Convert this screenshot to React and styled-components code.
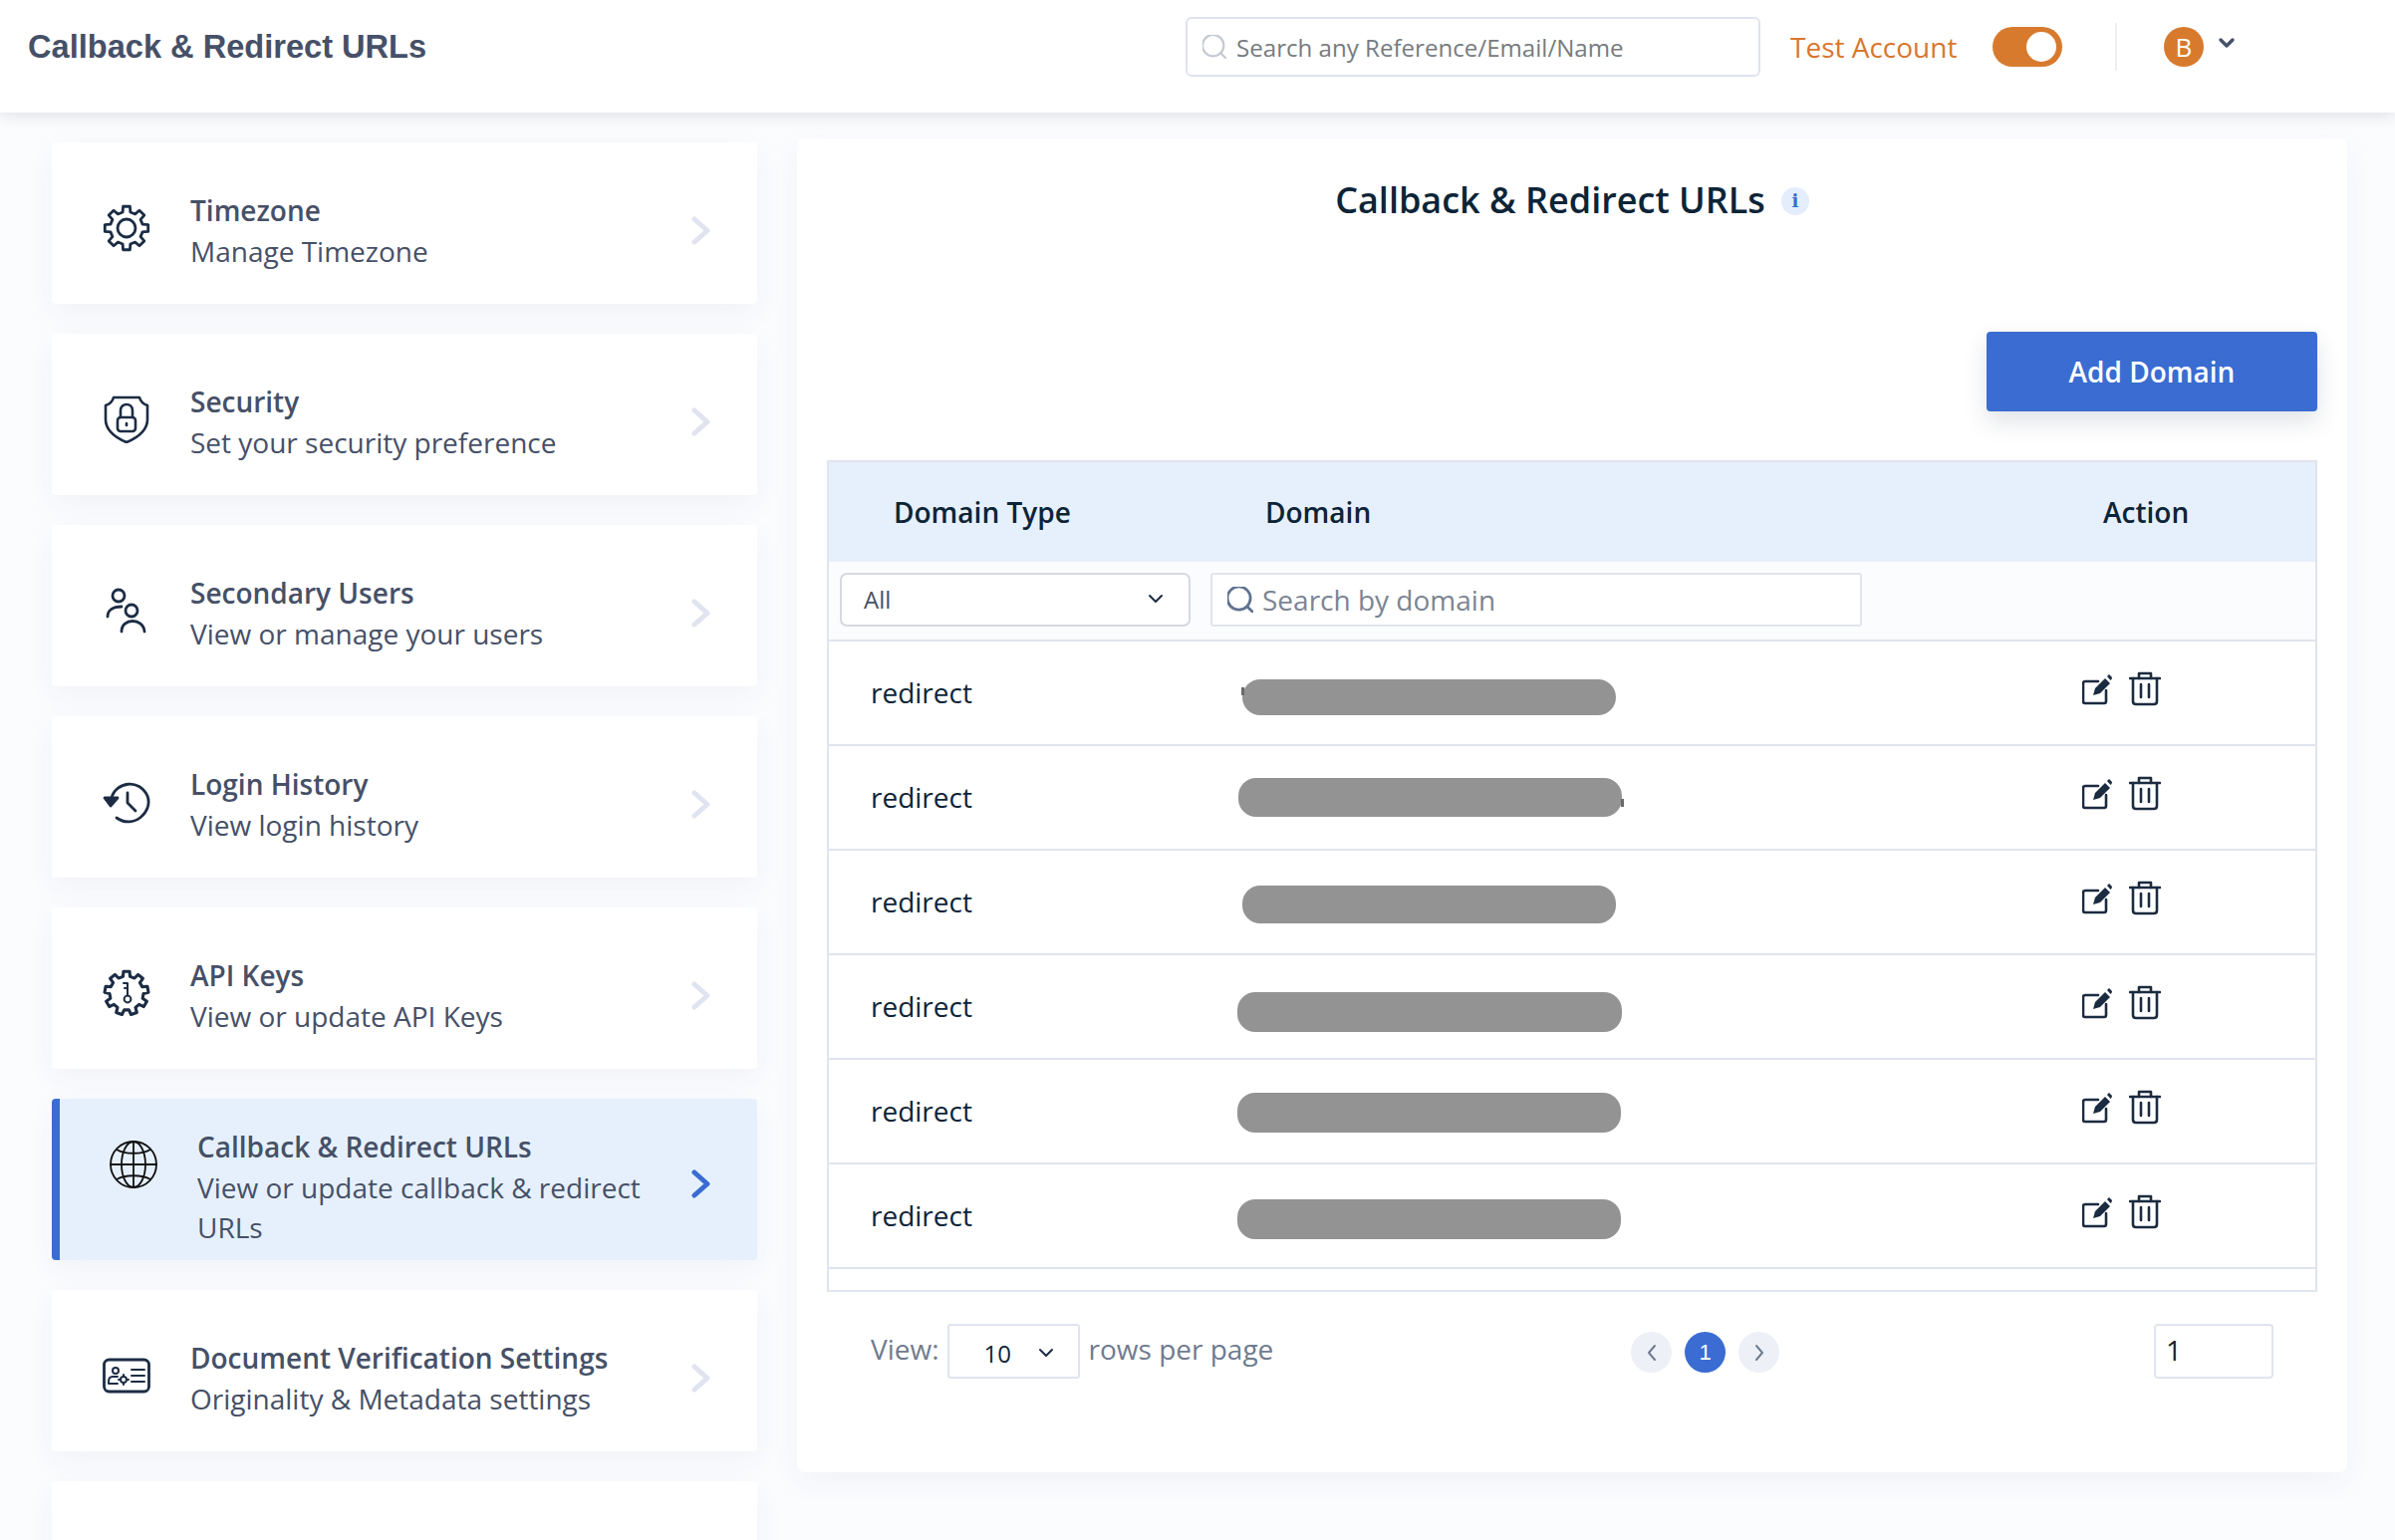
import React from "react";
import styled, { createGlobalStyle } from "styled-components";
import { Search } from "lucide-react";

const GlobalStyle = createGlobalStyle`
  html, body {
    margin: 0;
    height: 1546px;
    overflow: hidden;
    background: #fbfcfe;
    font-family: "Open Sans", "Noto Sans", sans-serif;
  }
  * { box-sizing: border-box; }
`;

const Page = styled.div`
  width: 2404px;
  height: 1546px;
  overflow: hidden;
`;

const Header = styled.header`
  position: relative;
  z-index: 2;
  height: 113px;
  padding: 17px 160px 36px 28px;
  display: flex;
  align-items: center;
  background: #fff;
  box-shadow: 0 3px 14px rgba(30, 35, 50, 0.13);
`;

const HeaderTitle = styled.h1`
  flex: 1;
  margin: 0;
  font-family: "Liberation Sans", Arial, sans-serif;
  font-size: 32.6px;
  font-weight: 700;
  color: #465067;
`;

const TopSearch = styled.label`
  width: 577px;
  height: 60px;
  padding-left: 15px;
  display: flex;
  align-items: center;
  gap: 10px;
  border: 2px solid #dfe3ef;
  border-radius: 6px;
  color: #c4c9d3;
`;

const TopSearchInput = styled.input`
  flex: 1;
  min-width: 0;
  border: 0;
  outline: 0;
  padding: 0;
  background: none;
  font: 400 24.1px "Open Sans", sans-serif;
  &::placeholder { color: #777b80; opacity: 1; }
`;

const AccountLabel = styled.span`
  width: 170px;
  margin-left: 30px;
  font-size: 28px;
  white-space: nowrap;
  color: #d9772d;
`;

const Toggle = styled.div`
  width: 70px;
  height: 40px;
  margin-left: 33px;
  padding: 5px 6px;
  display: flex;
  justify-content: flex-end;
  border-radius: 20px;
  background: #d87a2e;
`;

const ToggleKnob = styled.span`
  width: 30px;
  height: 30px;
  border-radius: 50%;
  background: #fff;
`;

const HeaderDivider = styled.span`
  width: 2px;
  height: 48px;
  margin: 0 47px 0 53px;
  background: #eeeff3;
`;

const Avatar = styled.span`
  width: 40px;
  height: 40px;
  display: flex;
  align-items: center;
  justify-content: center;
  border-radius: 50%;
  background: #d87a2e;
  color: #fff;
  font-size: 26px;
`;

const AvatarCaret = styled.svg`
  width: 18px;
  height: 12px;
  margin: 0 0 8px 14px;
`;

const Body = styled.div`
  display: flex;
  align-items: flex-start;
  gap: 40px;
  padding: 26px 48px 0 52px;
`;

const Sidebar = styled.nav`
  width: 708px;
  flex: none;
  padding-top: 4px;
  display: flex;
  flex-direction: column;
  gap: 30px;
`;

const MenuCard = styled.div`
  height: 162px;
  padding: 14px 47px 0 ${(p) => (p.$active ? 50 : 51)}px;
  display: flex;
  align-items: center;
  border-left: ${(p) => (p.$active ? "8px solid #3a6cd1" : "0")};
  border-radius: 4px;
  background: ${(p) => (p.$active ? "#e6f0fd" : "#fff")};
  box-shadow: 0 10px 30px rgba(40, 60, 110, 0.05);
`;

const MenuIcon = styled.svg`
  width: 48px;
  height: 48px;
  flex: none;
  margin-top: 15px;
  align-self: flex-start;
  fill: none;
  stroke: ${(p) => p.$stroke || "#1c2c44"};
  stroke-width: ${(p) => p.$weight || 2.8};
  stroke-linecap: round;
  stroke-linejoin: round;
`;

const MenuBlock = styled.div`
  flex: 1;
  display: flex;
  align-items: flex-start;
`;

const MenuText = styled.div`
  flex: 1;
  margin-left: 40px;
  padding-top: 2px;
  color: #465067;
  font-size: 28px;
  line-height: 39.5px;
`;

const MenuTitle = styled.div`
  margin-bottom: 1.5px;
  font-weight: 600;
`;

const MenuChevron = styled.svg`
  width: 19px;
  height: 29px;
  flex: none;
  margin-top: ${(p) => (p.$active ? -5 : 0)}px;
  fill: none;
  stroke: ${(p) => (p.$active ? "#3a6cd1" : "#e0e3f0")};
  stroke-width: 5;
  stroke-linecap: round;
  stroke-linejoin: round;
`;

const Panel = styled.main`
  flex: 1;
  height: 1339px;
  padding: 36px 30px 0;
  border-radius: 8px;
  background: #fff;
  box-shadow: 0 10px 30px rgba(40, 60, 110, 0.05);
`;

const PanelHeading = styled.div`
  height: 50px;
  display: flex;
  align-items: center;
  justify-content: center;
  gap: 16px;
`;

const PanelTitle = styled.h2`
  margin: 0;
  font-size: 36px;
  font-weight: 600;
  color: #0c2437;
`;

const InfoBadge = styled.span`
  width: 28px;
  height: 28px;
  margin-top: 3px;
  display: flex;
  align-items: center;
  justify-content: center;
  border-radius: 50%;
  background: #e3edfb;
  color: #3a6cd1;
  font: 700 18px "DejaVu Serif", serif;
`;

const PanelActions = styled.div`
  margin-top: 108px;
  display: flex;
  justify-content: flex-end;
`;

const AddButton = styled.button`
  width: 332px;
  height: 80px;
  border: 0;
  border-radius: 4px;
  background: #3a6cd1;
  box-shadow: 0 10px 24px rgba(30, 40, 70, 0.14);
  color: #fff;
  font: 600 28px "Open Sans", sans-serif;
`;

const Table = styled.div`
  height: 835px;
  margin-top: 49px;
  border: 2px solid #e0e4ee;
`;

const HeadRow = styled.div`
  height: 100px;
  display: grid;
  grid-template-columns: 373px 675px 1fr;
  align-items: center;
  background: #e6f0fd;
`;

const HeadCell = styled.div`
  padding-left: ${(p) => p.$inset}px;
  color: #0c2437;
  font-size: 28px;
  font-weight: 600;
`;

const FilterRow = styled.div`
  height: 80px;
  padding: 11px 0 0 11px;
  display: flex;
  align-items: flex-start;
  gap: 20px;
  border-bottom: 2px solid #e0e4ee;
  background: #fbfcfe;
`;

const TypeSelect = styled.div`
  width: 352px;
  height: 54px;
  padding: 0 25px 2px 22px;
  display: flex;
  align-items: center;
  justify-content: space-between;
  border: 2px solid #d5d8e0;
  border-radius: 7px;
  background: #fff;
  color: #465067;
  font-size: 24px;
`;

const DomainSearch = styled.label`
  width: 654px;
  height: 54px;
  padding-left: 15px;
  display: flex;
  align-items: center;
  gap: 9px;
  border: 2px solid #e0e4ee;
  border-radius: 3px;
  background: #fff;
  color: #5f7290;
`;

const DomainInput = styled.input`
  flex: 1;
  min-width: 0;
  border: 0;
  outline: 0;
  padding: 0;
  background: none;
  font: 400 28px "Open Sans", sans-serif;
  &::placeholder { color: #7c8493; opacity: 1; }
`;

const Caret = styled.svg`
  width: 16px;
  height: 10px;
  fill: none;
  stroke: #1c2c44;
  stroke-width: 2;
  stroke-linecap: round;
  stroke-linejoin: round;
`;

const Row = styled.div`
  height: 105px;
  display: grid;
  grid-template-columns: 373px 675px 1fr;
  align-items: center;
  border-bottom: 2px solid #e0e4ee;
`;

const TypeCell = styled.div`
  padding: 0 0 2px 42px;
  color: #0c2437;
  font-size: 28px;
`;

const Redaction = styled.div`
  position: relative;
  width: ${(p) => p.$width}px;
  height: ${(p) => p.$height}px;
  margin-left: ${(p) => p.$left}px;
  border-radius: 18px;
  background: #939393;
  transform: translateY(${(p) => p.$shift}px);

  &::before {
    content: "";
    display: ${(p) => (p.$tick ? "block" : "none")};
    position: absolute;
    top: ${(p) => (p.$tick === "left" ? 8 : 21)}px;
    ${(p) => (p.$tick === "left" ? "left: -1px;" : "right: -2px;")}
    width: 3px;
    height: 8px;
    background: #6a6a6a;
  }
`;

const ActionCell = styled.div`
  padding: 0 0 8px 210px;
  display: flex;
  align-items: center;
  gap: 17px;
`;

const ActionIcon = styled.svg`
  width: ${(p) => p.$w}px;
  height: 35px;
  fill: none;
  stroke: #1b2b40;
  stroke-width: 2.6;
  stroke-linecap: round;
  stroke-linejoin: round;
`;

const PenShape = styled.path`
  fill: #1b2b40;
  stroke: none;
`;

const Pagination = styled.div`
  height: 55px;
  margin-top: 32px;
  display: grid;
  grid-template-columns: 807px 1fr 120px;
  padding-right: 44px;
  align-items: start;
`;

const RowsGroup = styled.div`
  padding-left: 44px;
  display: flex;
  align-items: flex-start;
  color: #6f7b8f;
  font-size: 28px;
`;

const RowsLabel = styled.span`
  line-height: 50px;
`;

const RowsSelect = styled.div`
  width: 133px;
  height: 55px;
  margin: 0 9px 0 8px;
  padding: 3px 24px 0 35px;
  display: flex;
  align-items: center;
  justify-content: space-between;
  border: 2px solid #e0e4ee;
  border-radius: 3px;
  color: #0c2437;
  font-size: 24px;
`;

const Pager = styled.div`
  height: 57px;
  display: flex;
  align-items: center;
  gap: 13px;
`;

const PageDot = styled.span`
  width: 41px;
  height: 41px;
  display: flex;
  align-items: center;
  justify-content: center;
  border-radius: 50%;
  background: ${(p) => (p.$current ? "#3a6cd1" : "#edf0f6")};
  color: #fff;
  font: 400 22px "Liberation Sans", Arial, sans-serif;
`;

const PageArrow = styled.svg`
  width: 12px;
  height: 18px;
  fill: none;
  stroke: #6f7b8f;
  stroke-width: 2;
  stroke-linecap: round;
  stroke-linejoin: round;
`;

const PageInput = styled.input`
  width: 120px;
  height: 55px;
  padding: 0 0 4px 10px;
  border: 2px solid #e0e4ee;
  border-radius: 4px;
  outline: 0;
  color: #222;
  font: 400 28px "Open Sans", sans-serif;
`;

// outline of a cog, sampled from the tooth count and radii
function cogPath(teeth, outer, inner) {
  const step = (Math.PI * 2) / teeth;
  const parts = [];
  for (let i = 0; i < teeth; i++) {
    const a = i * step - Math.PI / 2;
    const pts = [
      [inner, a - step * 0.3],
      [outer, a - step * 0.2],
      [outer, a + step * 0.2],
      [inner, a + step * 0.3],
    ];
    pts.forEach(([r, t]) => {
      const x = (24 + r * Math.cos(t)).toFixed(2);
      const y = (24 + r * Math.sin(t)).toFixed(2);
      parts.push(`${parts.length ? "L" : "M"}${x} ${y}`);
    });
  }
  return parts.join(" ") + " Z";
}

const GearIcon = () => (
  <MenuIcon viewBox="0 0 48 48">
    <path d={cogPath(8, 22, 16.5)} />
    <circle cx="24" cy="24" r="9" />
  </MenuIcon>
);

const ShieldIcon = () => (
  <MenuIcon viewBox="0 0 48 48" $weight={2.6}>
    <path d="M11 2 H37 C38 6 42 9 45 10 V24 C45 34 36 42 24 47 C12 42 3 34 3 24 V10 C6 9 10 6 11 2 Z" />
    <rect x="15" y="22" width="18" height="14" rx="3" />
    <path d="M18 22 V15 C18 7 30 7 30 15 V22" />
    <path d="M24 28 V30" />
  </MenuIcon>
);

const UsersIcon = () => (
  <MenuIcon viewBox="0 0 48 48">
    <circle cx="16" cy="9" r="6" />
    <path d="M5 30 C5 24 10 20 19 20" />
    <circle cx="29" cy="24" r="6" />
    <path d="M19 45 C19 31 41 31 42 45" />
  </MenuIcon>
);

const HistoryIcon = () => (
  <MenuIcon viewBox="0 0 48 48">
    <path d="M9 20 C13 4 37 0 45 18 C51 34 31 52 14 40" />
    <path d="M25 15 V25 L33 33" />
    <path d="M2 20 H15 L8 28 Z" fill="#1c2c44" />
  </MenuIcon>
);

const KeyGearIcon = () => (
  <MenuIcon viewBox="0 0 48 48" $weight={3.1}>
    <path d={cogPath(9, 22, 17)} />
    <g strokeWidth="2">
      <circle cx="25" cy="30" r="3.4" />
      <path d="M25 26.5 V14 H21 M25 19 H22" />
    </g>
  </MenuIcon>
);

const GlobeIcon = () => (
  <MenuIcon viewBox="0 0 48 48" $stroke="#111" $weight={1.8}>
    <circle cx="24" cy="24" r="23" />
    <ellipse cx="24" cy="24" rx="12" ry="23" />
    <path d="M24 1 V47 M1 24 H47" />
    <path d="M7 9 C15 14 33 14 41 9 M7 39 C15 34 33 34 41 39" />
  </MenuIcon>
);

const DocIcon = () => (
  <MenuIcon viewBox="0 0 48 48">
    <rect x="1.5" y="8" width="45" height="32" rx="5" />
    <g strokeWidth="2">
      <circle cx="13" cy="19" r="3" />
      <path d="M15 25 H10 C7 25 6 27 6 30 V32 H15" />
      <circle cx="21" cy="28" r="3" />
      <path d="M21 23 V25 M21 31 V33 M16 28 H18 M24 28 H26" />
      <path d="M29 18 H42 M29 24 H42 M29 30 H42" />
    </g>
  </MenuIcon>
);

const Chevron = ({ active }) => (
  <MenuChevron viewBox="0 0 19 29" $active={active}>
    <polyline points="3,3 16,14.5 3,26" />
  </MenuChevron>
);

const menu = [
  { title: "Timezone", text: "Manage Timezone", Icon: GearIcon },
  { title: "Security", text: "Set your security preference", Icon: ShieldIcon },
  { title: "Secondary Users", text: "View or manage your users", Icon: UsersIcon },
  { title: "Login History", text: "View login history", Icon: HistoryIcon },
  { title: "API Keys", text: "View or update API Keys", Icon: KeyGearIcon },
  {
    title: "Callback & Redirect URLs",
    text: "View or update callback & redirect URLs",
    Icon: GlobeIcon,
    active: true,
  },
  {
    title: "Document Verification Settings",
    text: "Originality & Metadata settings",
    Icon: DocIcon,
  },
];

const rows = [
  { left: 42, width: 375, height: 36, shift: 4, tick: "left" },
  { left: 38, width: 385, height: 39, shift: 0, tick: "right" },
  { left: 42, width: 375, height: 38, shift: 2 },
  { left: 37, width: 386, height: 40, shift: 5 },
  { left: 37, width: 385, height: 40, shift: 1 },
  { left: 37, width: 385, height: 40, shift: 3 },
];

function App() {
  return (
    <Page>
      <GlobalStyle />
      <Header>
        <HeaderTitle>Callback &amp; Redirect URLs</HeaderTitle>
        <TopSearch>
          <Search size={24} viewBox="3 3 18 18" strokeWidth={1.6} />
          <TopSearchInput placeholder="Search any Reference/Email/Name" readOnly />
        </TopSearch>
        <AccountLabel>Test Account</AccountLabel>
        <Toggle>
          <ToggleKnob />
        </Toggle>
        <HeaderDivider />
        <Avatar>B</Avatar>
        <AvatarCaret viewBox="0 0 18 12">
          <polyline
            points="3,3 9,9 15,3"
            fill="none"
            stroke="#465067"
            strokeWidth="3.4"
            strokeLinecap="round"
            strokeLinejoin="round"
          />
        </AvatarCaret>
      </Header>
      <Body>
        <Sidebar>
          {menu.map(({ title, text, Icon, active }) => (
            <MenuCard key={title} $active={active}>
              <MenuBlock>
                <Icon />
                <MenuText>
                  <MenuTitle>{title}</MenuTitle>
                  <div>{text}</div>
                </MenuText>
              </MenuBlock>
              <Chevron active={active} />
            </MenuCard>
          ))}
          <MenuCard />
        </Sidebar>
        <Panel>
          <PanelHeading>
            <PanelTitle>Callback &amp; Redirect URLs</PanelTitle>
            <InfoBadge>i</InfoBadge>
          </PanelHeading>
          <PanelActions>
            <AddButton>Add Domain</AddButton>
          </PanelActions>
          <Table>
            <HeadRow>
              <HeadCell $inset={65}>Domain Type</HeadCell>
              <HeadCell $inset={65}>Domain</HeadCell>
              <HeadCell $inset={231}>Action</HeadCell>
            </HeadRow>
            <FilterRow>
              <TypeSelect>
                All
                <Caret viewBox="0 0 16 10">
                  <polyline points="2,2 8,8 14,2" />
                </Caret>
              </TypeSelect>
              <DomainSearch>
                <Search size={26} viewBox="3 3 18 18" strokeWidth={1.9} />
                <DomainInput placeholder="Search by domain" readOnly />
              </DomainSearch>
            </FilterRow>
            {rows.map((r, i) => (
              <Row key={i}>
                <TypeCell>redirect</TypeCell>
                <Redaction
                  $left={r.left}
                  $width={r.width}
                  $height={r.height}
                  $shift={r.shift}
                  $tick={r.tick}
                />
                <ActionCell>
                  <ActionIcon viewBox="0 0 30 35" $w={30}>
                    <path d="M16 10 H3 Q1 10 1 12 V30 Q1 32 3 32 H22 Q24 32 24 30 V19" />
                    <PenShape d="M11 24 L13 17 L23 7 L28 12 L18 22 Z" />
                    <PenShape d="M25 5 L27 3 L30 6 L29.5 8 L28.5 9 Z" />
                  </ActionIcon>
                  <ActionIcon viewBox="0 0 32 35" $w={32}>
                    <path d="M1 7 H31" />
                    <path d="M10 7 V2 H22 V7" />
                    <path d="M4 7 V30 Q4 33 7 33 H25 Q28 33 28 30 V7" />
                    <path d="M12 13 V26 M20 13 V26" />
                  </ActionIcon>
                </ActionCell>
              </Row>
            ))}
          </Table>
          <Pagination>
            <RowsGroup>
              <RowsLabel>View:</RowsLabel>
              <RowsSelect>
                10
                <Caret viewBox="0 0 16 10">
                  <polyline points="2,2 8,8 14,2" />
                </Caret>
              </RowsSelect>
              <RowsLabel>rows per page</RowsLabel>
            </RowsGroup>
            <Pager>
              <PageDot>
                <PageArrow viewBox="0 0 12 18">
                  <polyline points="9,2 3,9 9,16" />
                </PageArrow>
              </PageDot>
              <PageDot $current>1</PageDot>
              <PageDot>
                <PageArrow viewBox="0 0 12 18">
                  <polyline points="3,2 9,9 3,16" />
                </PageArrow>
              </PageDot>
            </Pager>
            <PageInput defaultValue="1" readOnly />
          </Pagination>
        </Panel>
      </Body>
    </Page>
  );
}

export default App;
